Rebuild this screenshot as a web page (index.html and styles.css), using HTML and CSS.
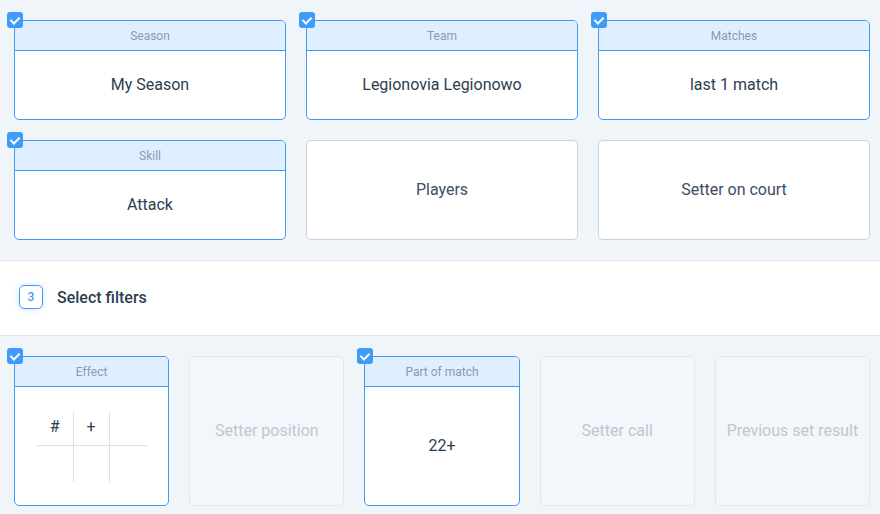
FILE: index.html
```html
<!DOCTYPE html>
<html lang="en">
<head>
  <meta charset="UTF-8">
  <title>Filters</title>
  <link rel="stylesheet" href="styles.css">
</head>
<body>
  <!-- step 2: scope -->
  <section class="area">
    <div class="grid-3">
      <div class="card on">
        <span class="check"></span>
        <div class="card-head">Season</div>
        <div class="card-body">My Season</div>
      </div>
      <div class="card on">
        <span class="check"></span>
        <div class="card-head">Team</div>
        <div class="card-body">Legionovia Legionowo</div>
      </div>
      <div class="card on">
        <span class="check"></span>
        <div class="card-head">Matches</div>
        <div class="card-body">last 1 match</div>
      </div>
      <div class="card on">
        <span class="check"></span>
        <div class="card-head">Skill</div>
        <div class="card-body">Attack</div>
      </div>
      <div class="card">
        <div class="card-body">Players</div>
      </div>
      <div class="card">
        <div class="card-body">Setter on court</div>
      </div>
    </div>
  </section>

  <!-- step 3 -->
  <div class="step">
    <span class="step-num">3</span>
    <span class="step-title">Select filters</span>
  </div>

  <section class="area area-filters">
    <div class="grid-5">
      <div class="card on tall">
        <span class="check"></span>
        <div class="card-head">Effect</div>
        <div class="card-body">
          <div class="effects">
            <span>#</span><span>+</span><span></span>
            <span></span><span></span><span></span>
          </div>
        </div>
      </div>
      <div class="card off tall">
        <div class="card-body">Setter position</div>
      </div>
      <div class="card on tall">
        <span class="check"></span>
        <div class="card-head">Part of match</div>
        <div class="card-body">22+</div>
      </div>
      <div class="card off tall">
        <div class="card-body">Setter call</div>
      </div>
      <div class="card off tall">
        <div class="card-body">Previous set result</div>
      </div>
    </div>
  </section>
</body>
</html>
```

FILE: styles.css
```css
* {
  box-sizing: border-box;
}

body {
  margin: 0;
  background: #f0f5fa;
  font-family: Roboto, "Liberation Sans", sans-serif;
  color: #2c3e50;
  overflow: hidden;
}

.area {
  padding: 20px 10px 20px 14px;
  border-bottom: 1px solid #dde4ee;
}
.area-filters {
  border-bottom: 0;
}

.grid-3 {
  display: grid;
  grid-template-columns: repeat(3, 1fr);
  gap: 20px;
}
.grid-5 {
  display: grid;
  grid-template-columns: repeat(5, 1fr);
  gap: 20px;
}

.card {
  position: relative;
  display: flex;
  flex-direction: column;
  height: 100px;
  background: #fff;
  border: 1px solid #c9d3e0;
  border-radius: 5px;
}
.card.tall {
  height: 150px;
}
.card.on {
  border-color: #3f9bf7;
}
.card.off {
  background: #f3f6fa;
  border-color: #e2e8f0;
}

.card-head {
  height: 30px;
  line-height: 31px;
  text-align: center;
  font-size: 12px;
  color: #8a9ab0;
  background: #e0efff;
  border-bottom: 1px solid #3f9bf7;
  border-radius: 4px 4px 0 0;
}

.card-body {
  flex: 1;
  display: flex;
  align-items: center;
  justify-content: center;
  padding-bottom: 2px;
  font-size: 16px;
}
.card:not(.on) .card-body {
  color: #3c4d63;
}
.card.off .card-body {
  color: #bec7d2;
}

.check {
  position: absolute;
  left: -8px;
  top: -9px;
  width: 16px;
  height: 16px;
  border-radius: 3px;
  background: #3f9bf7;
}
.check::after {
  content: "";
  position: absolute;
  left: 5px;
  top: 3px;
  width: 4px;
  height: 7px;
  border: solid #fff;
  border-width: 0 2px 2px 0;
  transform: rotate(45deg);
}

.step {
  display: flex;
  align-items: center;
  gap: 14px;
  height: 75px;
  padding: 0 0 2px 19px;
  background: #fff;
  border-bottom: 1px solid #dde4ee;
}
.step-num {
  display: flex;
  align-items: center;
  justify-content: center;
  width: 24px;
  height: 24px;
  border: 1px solid #3f9bf7;
  border-radius: 5px;
  color: #3f9bf7;
  font-size: 12px;
  font-weight: 500;
  box-shadow: 0 0 6px rgba(63, 155, 247, 0.25);
}
.step-title {
  font-size: 16px;
  font-weight: 500;
  color: #2c3e50;
}

.effects {
  display: grid;
  grid-template-columns: 37px 36px 37px;
  grid-template-rows: 34px 36px;
  margin-top: 4px;
}
.effects span {
  display: flex;
  align-items: center;
  justify-content: center;
  font-size: 16px;
  color: #2c3e50;
  border-right: 1px solid #e0e0e0;
}
.effects span:nth-child(3n) {
  border-right: 0;
}
.effects span:nth-child(-n+3) {
  padding-bottom: 4px;
  border-bottom: 1px solid #e0e0e0;
}
```
